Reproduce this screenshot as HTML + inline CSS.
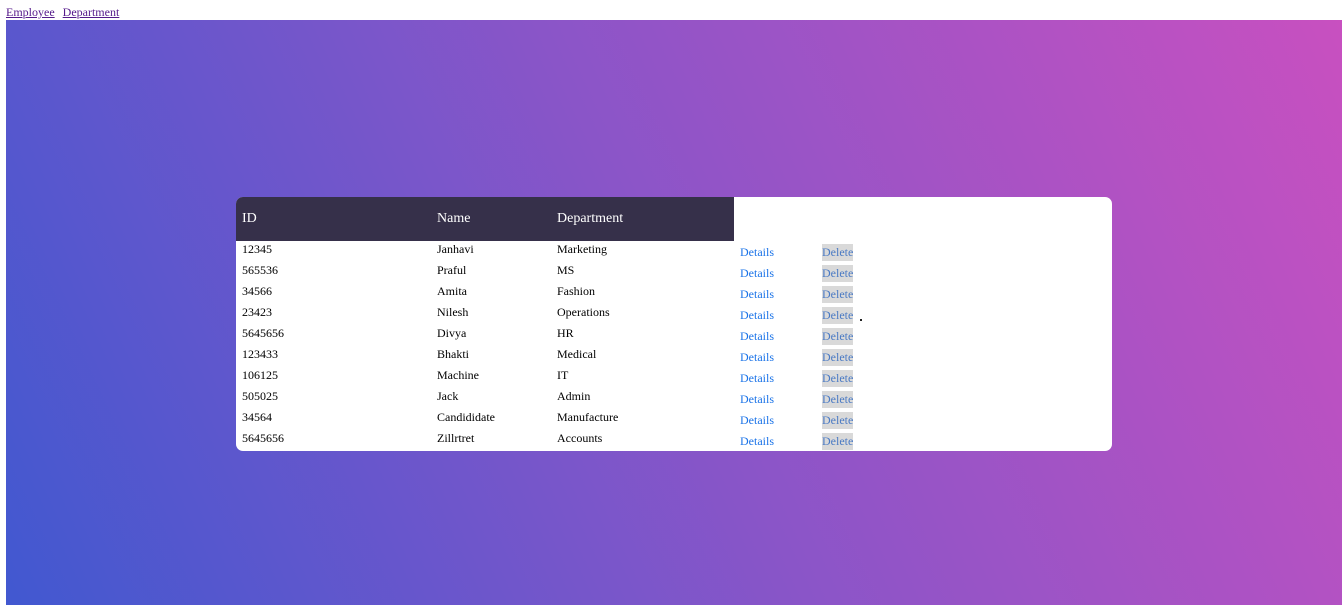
<!DOCTYPE html>
<html><head><meta charset="utf-8"><style>
html,body{margin:0;padding:0;background:#fff;}
body{width:1342px;height:605px;position:relative;overflow:hidden;font-family:"Liberation Serif",serif;}
.nav{position:absolute;left:6px;top:5px;font-size:12px;}
.nav a{color:#551a8b;text-decoration:underline;margin-right:5px;}
.bg{position:absolute;left:6px;top:20px;width:1336px;height:585px;background:linear-gradient(65deg,#4158D0 0%,#8a55c8 50%,#C850C0 100%);}
.card{position:absolute;left:236px;top:197px;width:876px;height:254px;background:#fff;border-radius:7px;overflow:hidden;}
.head{position:absolute;left:0;top:0;width:498px;height:44px;background:#36304a;color:#fff;font-size:14px;}
.head span{position:absolute;top:14px;}
.row{position:absolute;left:0;height:21px;width:876px;font-size:12px;color:#000;}
.row span{position:absolute;top:1px;}
.row .d{color:#1a73e8;top:4px;}
.row .x{color:#4a7ac4;background:#d9d9d9;top:3px;padding:1px 0;}
.dot{position:absolute;left:860px;top:319px;width:2px;height:2px;background:#222;}
</style></head><body>
<div class="nav"><a>Employee</a> <a>Department</a></div>
<div class="bg"></div>
<div class="card">
<div class="head"><span style="left:6px">ID</span><span style="left:201px">Name</span><span style="left:321px">Department</span></div>
<div class="row" style="top:44px"><span style="left:6px">12345</span><span style="left:201px">Janhavi</span><span style="left:321px">Marketing</span><span class="d" style="left:504px">Details</span><span class="x" style="left:586px">Delete</span></div>
<div class="row" style="top:65px"><span style="left:6px">565536</span><span style="left:201px">Praful</span><span style="left:321px">MS</span><span class="d" style="left:504px">Details</span><span class="x" style="left:586px">Delete</span></div>
<div class="row" style="top:86px"><span style="left:6px">34566</span><span style="left:201px">Amita</span><span style="left:321px">Fashion</span><span class="d" style="left:504px">Details</span><span class="x" style="left:586px">Delete</span></div>
<div class="row" style="top:107px"><span style="left:6px">23423</span><span style="left:201px">Nilesh</span><span style="left:321px">Operations</span><span class="d" style="left:504px">Details</span><span class="x" style="left:586px">Delete</span></div>
<div class="row" style="top:128px"><span style="left:6px">5645656</span><span style="left:201px">Divya</span><span style="left:321px">HR</span><span class="d" style="left:504px">Details</span><span class="x" style="left:586px">Delete</span></div>
<div class="row" style="top:149px"><span style="left:6px">123433</span><span style="left:201px">Bhakti</span><span style="left:321px">Medical</span><span class="d" style="left:504px">Details</span><span class="x" style="left:586px">Delete</span></div>
<div class="row" style="top:170px"><span style="left:6px">106125</span><span style="left:201px">Machine</span><span style="left:321px">IT</span><span class="d" style="left:504px">Details</span><span class="x" style="left:586px">Delete</span></div>
<div class="row" style="top:191px"><span style="left:6px">505025</span><span style="left:201px">Jack</span><span style="left:321px">Admin</span><span class="d" style="left:504px">Details</span><span class="x" style="left:586px">Delete</span></div>
<div class="row" style="top:212px"><span style="left:6px">34564</span><span style="left:201px">Candididate</span><span style="left:321px">Manufacture</span><span class="d" style="left:504px">Details</span><span class="x" style="left:586px">Delete</span></div>
<div class="row" style="top:233px"><span style="left:6px">5645656</span><span style="left:201px">Zillrtret</span><span style="left:321px">Accounts</span><span class="d" style="left:504px">Details</span><span class="x" style="left:586px">Delete</span></div>
</div>
<div class="dot"></div>
</body></html>
